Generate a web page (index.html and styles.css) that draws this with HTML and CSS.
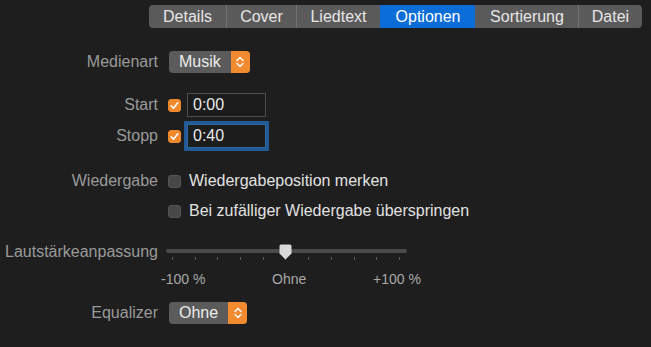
FILE: index.html
```html
<!DOCTYPE html>
<html>
<head>
  <title>Optionen</title>
  <link rel="stylesheet" href="styles.css">
</head>
<body>
  <div class="tabs">
    <div class="tab tab-details">Details</div>
    <div class="tab tab-cover">Cover</div>
    <div class="tab tab-lyrics">Liedtext</div>
    <div class="tab tab-options active">Optionen</div>
    <div class="tab tab-sort">Sortierung</div>
    <div class="tab tab-file">Datei</div>
  </div>

  <div class="row row-media">
    <label class="label">Medienart</label>
    <div class="popup">
      <span class="popup-text">Musik</span>
      <span class="popup-cap">
        <svg width="10" height="14" viewBox="0 0 10 14"><path d="M2 5.5 L5 2.5 L8 5.5 M2 8.5 L5 11.5 L8 8.5" fill="none" stroke="#fff" stroke-width="1.4" stroke-linecap="round" stroke-linejoin="round"/></svg>
      </span>
    </div>
  </div>

  <div class="row row-start">
    <label class="label">Start</label>
    <span class="check on">
      <svg width="13" height="13" viewBox="0 0 13 13"><path d="M3.2 6.8 L5.5 9.2 L9.8 3.8" fill="none" stroke="#fff" stroke-width="1.6" stroke-linecap="round" stroke-linejoin="round"/></svg>
    </span>
    <div class="field">0:00</div>
  </div>

  <div class="row row-stop">
    <label class="label">Stopp</label>
    <span class="check on">
      <svg width="13" height="13" viewBox="0 0 13 13"><path d="M3.2 6.8 L5.5 9.2 L9.8 3.8" fill="none" stroke="#fff" stroke-width="1.6" stroke-linecap="round" stroke-linejoin="round"/></svg>
    </span>
    <div class="field focused">0:40</div>
  </div>

  <div class="row row-play">
    <label class="label">Wiedergabe</label>
    <span class="check"></span>
    <span class="option">Wiedergabeposition merken</span>
  </div>

  <div class="row row-skip">
    <label class="label"></label>
    <span class="check"></span>
    <span class="option">Bei zufälliger Wiedergabe überspringen</span>
  </div>

  <div class="row row-volume">
    <label class="label">Lautstärkeanpassung</label>
    <div class="slider">
      <div class="track"></div>
      <div class="ticks">
        <i></i><i></i><i></i><i></i><i></i><i></i><i></i><i></i><i></i><i></i><i></i>
      </div>
      <svg class="thumb" width="13" height="16" viewBox="0 0 13 16"><path d="M2 0.5 H11 Q12.5 0.5 12.5 2 V9.5 L6.5 15.5 L0.5 9.5 V2 Q0.5 0.5 2 0.5 Z" fill="#d9d9d9"/></svg>
    </div>
  </div>

  <div class="row row-scale">
    <label class="label"></label>
    <div class="scale">
      <span>-100 %</span>
      <span>Ohne</span>
      <span>+100 %</span>
    </div>
  </div>

  <div class="row row-eq">
    <label class="label">Equalizer</label>
    <div class="popup">
      <span class="popup-text">Ohne</span>
      <span class="popup-cap">
        <svg width="10" height="14" viewBox="0 0 10 14"><path d="M2 5.5 L5 2.5 L8 5.5 M2 8.5 L5 11.5 L8 8.5" fill="none" stroke="#fff" stroke-width="1.4" stroke-linecap="round" stroke-linejoin="round"/></svg>
      </span>
    </div>
  </div>
</body>
</html>
```

FILE: styles.css
```css
/* dark options panel */
body {
  margin: 0;
  background-color: #1e1e1e;
  font-family: "Liberation Sans", Arial, sans-serif;
  font-size: 16px;
  color: #dedede;
}
.tabs {
  display: flex;
  margin: 5px 0 0 149px;
  width: 493px;
  height: 23px;
  border-radius: 4px;
  overflow: hidden;
  background-color: #5a5a5a;
}
.tab {
  display: flex;
  align-items: center;
  justify-content: center;
  height: 100%;
  border-left: 1px solid #727272;
  color: #e6e6e6;
  box-sizing: border-box;
}
.tab:first-child {
  border-left: none;
}
.tab.active {
  background-color: #0b6dd8;
  border-left-color: #0b6dd8;
  color: #fff;
}
.tab.active + .tab {
  border-left-color: #5a5a5a;
}
.tab-details { width: 77px; }
.tab-cover { width: 70px; }
.tab-lyrics { width: 84px; }
.tab-options { width: 95px; }
.tab-sort { width: 103px; }
.tab-file { width: 64px; }

.row {
  display: flex;
  align-items: center;
}
.label {
  flex: none;
  width: 158px;
  margin-right: 10px;
  text-align: right;
  color: #9a9a9a;
  white-space: nowrap;
}
.row-media { margin-top: 23px; height: 22px; }
.row-start { margin-top: 20px; height: 24px; }
.row-stop { margin-top: 7px; height: 24px; }
.row-play { margin-top: 24px; height: 18px; }
.row-skip { margin-top: 12px; height: 18px; }
.row-volume { margin-top: 23px; height: 18px; }
.row-scale { margin-top: 10px; height: 16px; }
.row-eq { margin-top: 15px; height: 22px; }

.popup {
  display: flex;
  height: 22px;
  margin-left: 1px;
  border-radius: 4px;
  overflow: hidden;
  background-color: #5b5b5b;
}
.popup-text {
  display: flex;
  align-items: center;
  padding: 0 10px 0 10px;
  color: #ececec;
}
.popup-cap {
  display: flex;
  align-items: center;
  justify-content: center;
  width: 19px;
  background-color: #f28a2f;
}

.check {
  flex: none;
  width: 13px;
  height: 13px;
  box-sizing: border-box;
  border-radius: 3px;
  background-color: #474747;
  border: 1px solid #555;
}
.check.on {
  background-color: #f0882c;
  border-color: #f0882c;
  position: relative;
}
.check.on svg {
  position: absolute;
  left: -1px;
  top: -1px;
}
.field {
  display: flex;
  align-items: center;
  width: 79px;
  height: 24px;
  margin-left: 6px;
  padding-left: 5px;
  box-sizing: border-box;
  border: 1px solid #4c4c4c;
  background-color: #1c1c1c;
  color: #e8e8e8;
}
.field.focused {
  border-color: #2d6aa6;
  box-shadow: 0 0 0 3px #225b93;
}
.option {
  margin-left: 8px;
  color: #e2e2e2;
  white-space: nowrap;
}

.slider {
  position: relative;
  width: 241px;
  height: 18px;
  margin-left: -2px;
}
.track {
  margin-top: 6px;
  height: 4px;
  border-radius: 2px;
  background-color: #4a4a4a;
}
.ticks {
  display: flex;
  justify-content: space-between;
  margin: 4px 7px 0 6px;
}
.ticks i {
  width: 1px;
  height: 3px;
  background-color: #5c5c5c;
}
.thumb {
  position: absolute;
  left: 113px;
  top: 1px;
}
.scale {
  display: flex;
  justify-content: space-between;
  width: 260px;
  margin-left: -7px;
  font-size: 14px;
  color: #a8a8a8;
}
```
